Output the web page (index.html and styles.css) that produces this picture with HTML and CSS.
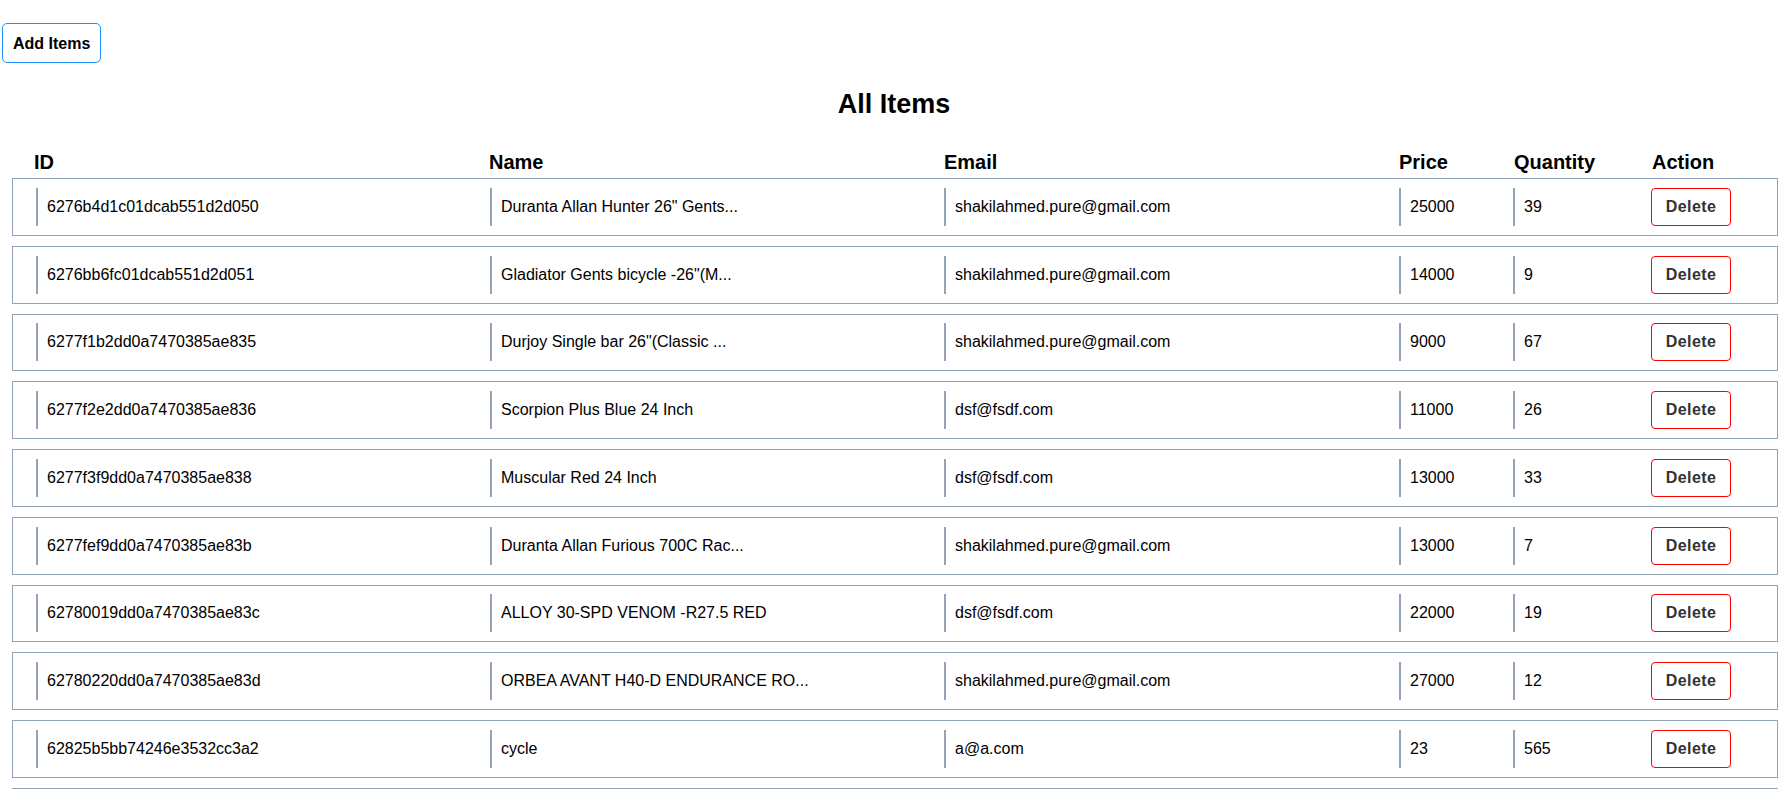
FILE: index.html
```html
<!DOCTYPE html>
<html lang="en">
<head>
<meta charset="utf-8">
<title>All Items</title>
<link rel="stylesheet" href="styles.css">
</head>
<body>
<div class="top">
  <button class="add-btn">Add Items</button>
</div>
<h2 class="title">All Items</h2>
<div class="wrap">
  <div class="head">
    <div>ID</div><div>Name</div><div>Email</div><div>Price</div><div>Quantity</div><div>Action</div>
  </div>
  <div class="row">
    <div class="cell">6276b4d1c01dcab551d2d050</div>
    <div class="cell">Duranta Allan Hunter 26" Gents...</div>
    <div class="cell">shakilahmed.pure@gmail.com</div>
    <div class="cell">25000</div>
    <div class="cell">39</div>
    <div class="act"><button class="del-btn">Delete</button></div>
  </div>
  <div class="row">
    <div class="cell">6276bb6fc01dcab551d2d051</div>
    <div class="cell">Gladiator Gents bicycle -26"(M...</div>
    <div class="cell">shakilahmed.pure@gmail.com</div>
    <div class="cell">14000</div>
    <div class="cell">9</div>
    <div class="act"><button class="del-btn">Delete</button></div>
  </div>
  <div class="row">
    <div class="cell">6277f1b2dd0a7470385ae835</div>
    <div class="cell">Durjoy Single bar 26"(Classic ...</div>
    <div class="cell">shakilahmed.pure@gmail.com</div>
    <div class="cell">9000</div>
    <div class="cell">67</div>
    <div class="act"><button class="del-btn">Delete</button></div>
  </div>
  <div class="row">
    <div class="cell">6277f2e2dd0a7470385ae836</div>
    <div class="cell">Scorpion Plus Blue 24 Inch</div>
    <div class="cell">dsf@fsdf.com</div>
    <div class="cell">11000</div>
    <div class="cell">26</div>
    <div class="act"><button class="del-btn">Delete</button></div>
  </div>
  <div class="row">
    <div class="cell">6277f3f9dd0a7470385ae838</div>
    <div class="cell">Muscular Red 24 Inch</div>
    <div class="cell">dsf@fsdf.com</div>
    <div class="cell">13000</div>
    <div class="cell">33</div>
    <div class="act"><button class="del-btn">Delete</button></div>
  </div>
  <div class="row">
    <div class="cell">6277fef9dd0a7470385ae83b</div>
    <div class="cell">Duranta Allan Furious 700C Rac...</div>
    <div class="cell">shakilahmed.pure@gmail.com</div>
    <div class="cell">13000</div>
    <div class="cell">7</div>
    <div class="act"><button class="del-btn">Delete</button></div>
  </div>
  <div class="row">
    <div class="cell">62780019dd0a7470385ae83c</div>
    <div class="cell">ALLOY 30-SPD VENOM -R27.5 RED</div>
    <div class="cell">dsf@fsdf.com</div>
    <div class="cell">22000</div>
    <div class="cell">19</div>
    <div class="act"><button class="del-btn">Delete</button></div>
  </div>
  <div class="row">
    <div class="cell">62780220dd0a7470385ae83d</div>
    <div class="cell">ORBEA AVANT H40-D ENDURANCE RO...</div>
    <div class="cell">shakilahmed.pure@gmail.com</div>
    <div class="cell">27000</div>
    <div class="cell">12</div>
    <div class="act"><button class="del-btn">Delete</button></div>
  </div>
  <div class="row">
    <div class="cell">62825b5bb74246e3532cc3a2</div>
    <div class="cell">cycle</div>
    <div class="cell">a@a.com</div>
    <div class="cell">23</div>
    <div class="cell">565</div>
    <div class="act"><button class="del-btn">Delete</button></div>
  </div>
  <div class="row row-empty"></div>
</div>
</body>
</html>
```

FILE: styles.css
```css
html, body {
  margin: 0;
  padding: 0;
  background: #fff;
  color: #000;
  font-family: "Liberation Sans", Arial, sans-serif;
}

.top {
  padding: 23px 0 0 2px;
  height: 40px;
}

.add-btn {
  box-sizing: border-box;
  height: 40px;
  padding: 2px 10px 0;
  background: #fff;
  border: 1px solid #1e90ff;
  border-radius: 5px;
  font-family: "Liberation Sans", Arial, sans-serif;
  font-size: 16px;
  font-weight: bold;
  color: #000;
  line-height: 18px;
}

.title {
  margin: 26px 0 0;
  font-size: 27px;
  line-height: 31px;
  font-weight: bold;
  text-align: center;
}

.wrap {
  padding: 0 10px 0 12px;
}

.head {
  display: grid;
  grid-template-columns: 455px 455px 455px 115px 138px 1fr;
  padding-left: 22px;
  margin-top: 31px;
  font-size: 20px;
  font-weight: bold;
  line-height: 23px;
  margin-bottom: 4px;
}

.row {
  box-sizing: border-box;
  height: 57.75px;
  display: grid;
  grid-template-columns: 454px 454px 455px 114px 138px 1fr;
  align-items: center;
  padding-left: 23px;
  border: 1px solid #94a3b8;
  margin-bottom: 10px;
  font-size: 16px;
}

.cell {
  border-left: 2px solid #94a3b8;
  padding: 10px 0 10px 9px;
  line-height: 18px;
  white-space: nowrap;
}

.act {
  display: flex;
}

.del-btn {
  box-sizing: border-box;
  width: 80px;
  height: 38px;
  padding: 0;
  background: #fff;
  border: 1px solid #ff0000;
  border-radius: 4px;
  font-family: "Liberation Sans", Arial, sans-serif;
  font-size: 16px;
  font-weight: bold;
  letter-spacing: 0.4px;
  color: #333;
}
```
